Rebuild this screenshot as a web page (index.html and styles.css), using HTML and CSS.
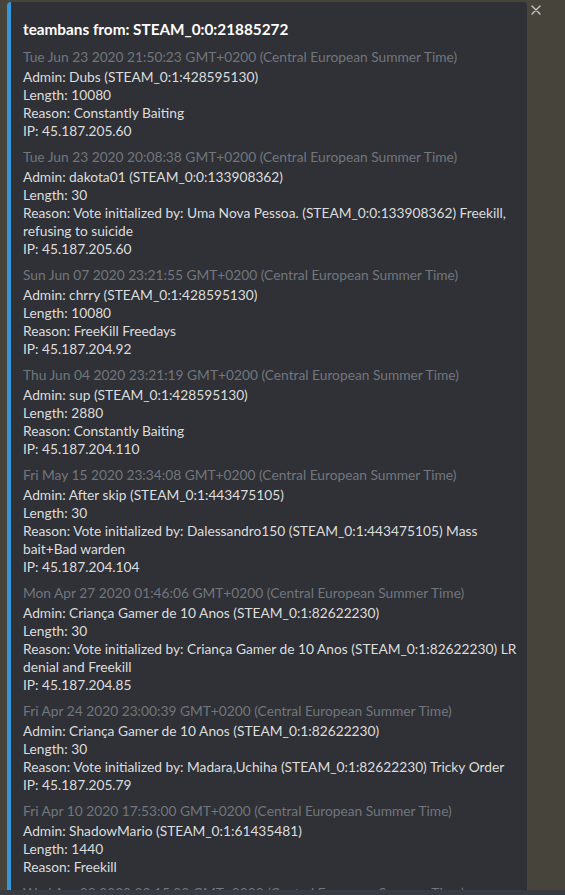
FILE: index.html
```html
<!DOCTYPE html>
<html lang="en">
<head>
  <meta charset="UTF-8">
  <meta name="viewport" content="width=device-width, initial-scale=1">
  <title>teambans</title>
  <link rel="stylesheet" href="styles.css">
</head>
<body>

  <div class="viewer">
    <div class="embed">
      <div class="embed-title">teambans from: STEAM_0:0:21885272</div>

      <div class="ban">
        <div class="ban-date">Tue Jun 23 2020 21:50:23 GMT+0200 (Central European Summer Time)</div>
        <div>Admin: Dubs (STEAM_0:1:428595130)</div>
        <div>Length: 10080</div>
        <div>Reason: Constantly Baiting</div>
        <div>IP: 45.187.205.60</div>
      </div>

      <div class="ban">
        <div class="ban-date">Tue Jun 23 2020 20:08:38 GMT+0200 (Central European Summer Time)</div>
        <div>Admin: dakota01 (STEAM_0:0:133908362)</div>
        <div>Length: 30</div>
        <div>Reason: Vote initialized by: Uma Nova Pessoa. (STEAM_0:0:133908362) Freekill, refusing to suicide</div>
        <div>IP: 45.187.205.60</div>
      </div>

      <div class="ban">
        <div class="ban-date">Sun Jun 07 2020 23:21:55 GMT+0200 (Central European Summer Time)</div>
        <div>Admin: chrry (STEAM_0:1:428595130)</div>
        <div>Length: 10080</div>
        <div>Reason: FreeKill Freedays</div>
        <div>IP: 45.187.204.92</div>
      </div>

      <div class="ban">
        <div class="ban-date">Thu Jun 04 2020 23:21:19 GMT+0200 (Central European Summer Time)</div>
        <div>Admin: sup (STEAM_0:1:428595130)</div>
        <div>Length: 2880</div>
        <div>Reason: Constantly Baiting</div>
        <div>IP: 45.187.204.110</div>
      </div>

      <div class="ban">
        <div class="ban-date">Fri May 15 2020 23:34:08 GMT+0200 (Central European Summer Time)</div>
        <div>Admin: After skip (STEAM_0:1:443475105)</div>
        <div>Length: 30</div>
        <div>Reason: Vote initialized by: Dalessandro150 (STEAM_0:1:443475105) Mass bait+Bad warden</div>
        <div>IP: 45.187.204.104</div>
      </div>

      <div class="ban">
        <div class="ban-date">Mon Apr 27 2020 01:46:06 GMT+0200 (Central European Summer Time)</div>
        <div>Admin: Criança Gamer de 10 Anos (STEAM_0:1:82622230)</div>
        <div>Length: 30</div>
        <div>Reason: Vote initialized by: Criança Gamer de 10 Anos (STEAM_0:1:82622230) LR denial and Freekill</div>
        <div>IP: 45.187.204.85</div>
      </div>

      <div class="ban">
        <div class="ban-date">Fri Apr 24 2020 23:00:39 GMT+0200 (Central European Summer Time)</div>
        <div>Admin: Criança Gamer de 10 Anos (STEAM_0:1:82622230)</div>
        <div>Length: 30</div>
        <div>Reason: Vote initialized by: Madara,Uchiha (STEAM_0:1:82622230) Tricky Order</div>
        <div>IP: 45.187.205.79</div>
      </div>

      <div class="ban">
        <div class="ban-date">Fri Apr 10 2020 17:53:00 GMT+0200 (Central European Summer Time)</div>
        <div>Admin: ShadowMario (STEAM_0:1:61435481)</div>
        <div>Length: 1440</div>
        <div>Reason: Freekill</div>
      </div>

      <div class="ban">
        <div class="ban-date">Wed Apr 08 2020 22:15:02 GMT+0200 (Central European Summer Time)</div>
      </div>
    </div>

    <button class="close-btn" aria-label="Close">
      <svg width="10" height="10" viewBox="0 0 10 10">
        <path d="M1 1 L9 9 M9 1 L1 9" stroke="#c4c6c9" stroke-width="1.4" stroke-linecap="round"/>
      </svg>
    </button>
  </div>

  <div class="status-bar"></div>

</body>
</html>
```

FILE: styles.css
```css
/* Page */
html, body {
  height: 100%;
}

body {
  margin: 0;
  display: flex;
  flex-direction: column;
  background-color: #47443b;
  font-family: Lato, "Noto Sans", sans-serif;
  overflow: hidden;
}

.viewer {
  flex: 1;
  min-height: 0;
  display: flex;
  align-items: flex-start;
  gap: 4px;
  padding: 2px 0 0 7px;
  overflow: hidden;
}

.status-bar {
  height: 5px;
  flex: none;
  background-color: #383b41;
}

/* Embed card */
.embed {
  width: 500px;
  flex: none;
  padding: 17px 4px 20px 12px;
  border-left: 4px solid #3498db;
  border-radius: 4px 4px 0 0;
  background-color: #2f3136;
  color: #dcddde;
  font-size: 13.75px;
  line-height: 18px;
}

.embed-title {
  font-size: 15.3px;
  line-height: 20px;
  font-weight: 700;
  color: #fff;
  margin-bottom: 9px;
}

.ban {
  margin-bottom: 8px;
}

.ban-date {
  color: #72767d;
  margin-bottom: 2px;
}

/* Close button */
.close-btn {
  display: flex;
  padding: 0;
  margin-top: 3px;
  border: none;
  background: none;
  cursor: pointer;
}
```
